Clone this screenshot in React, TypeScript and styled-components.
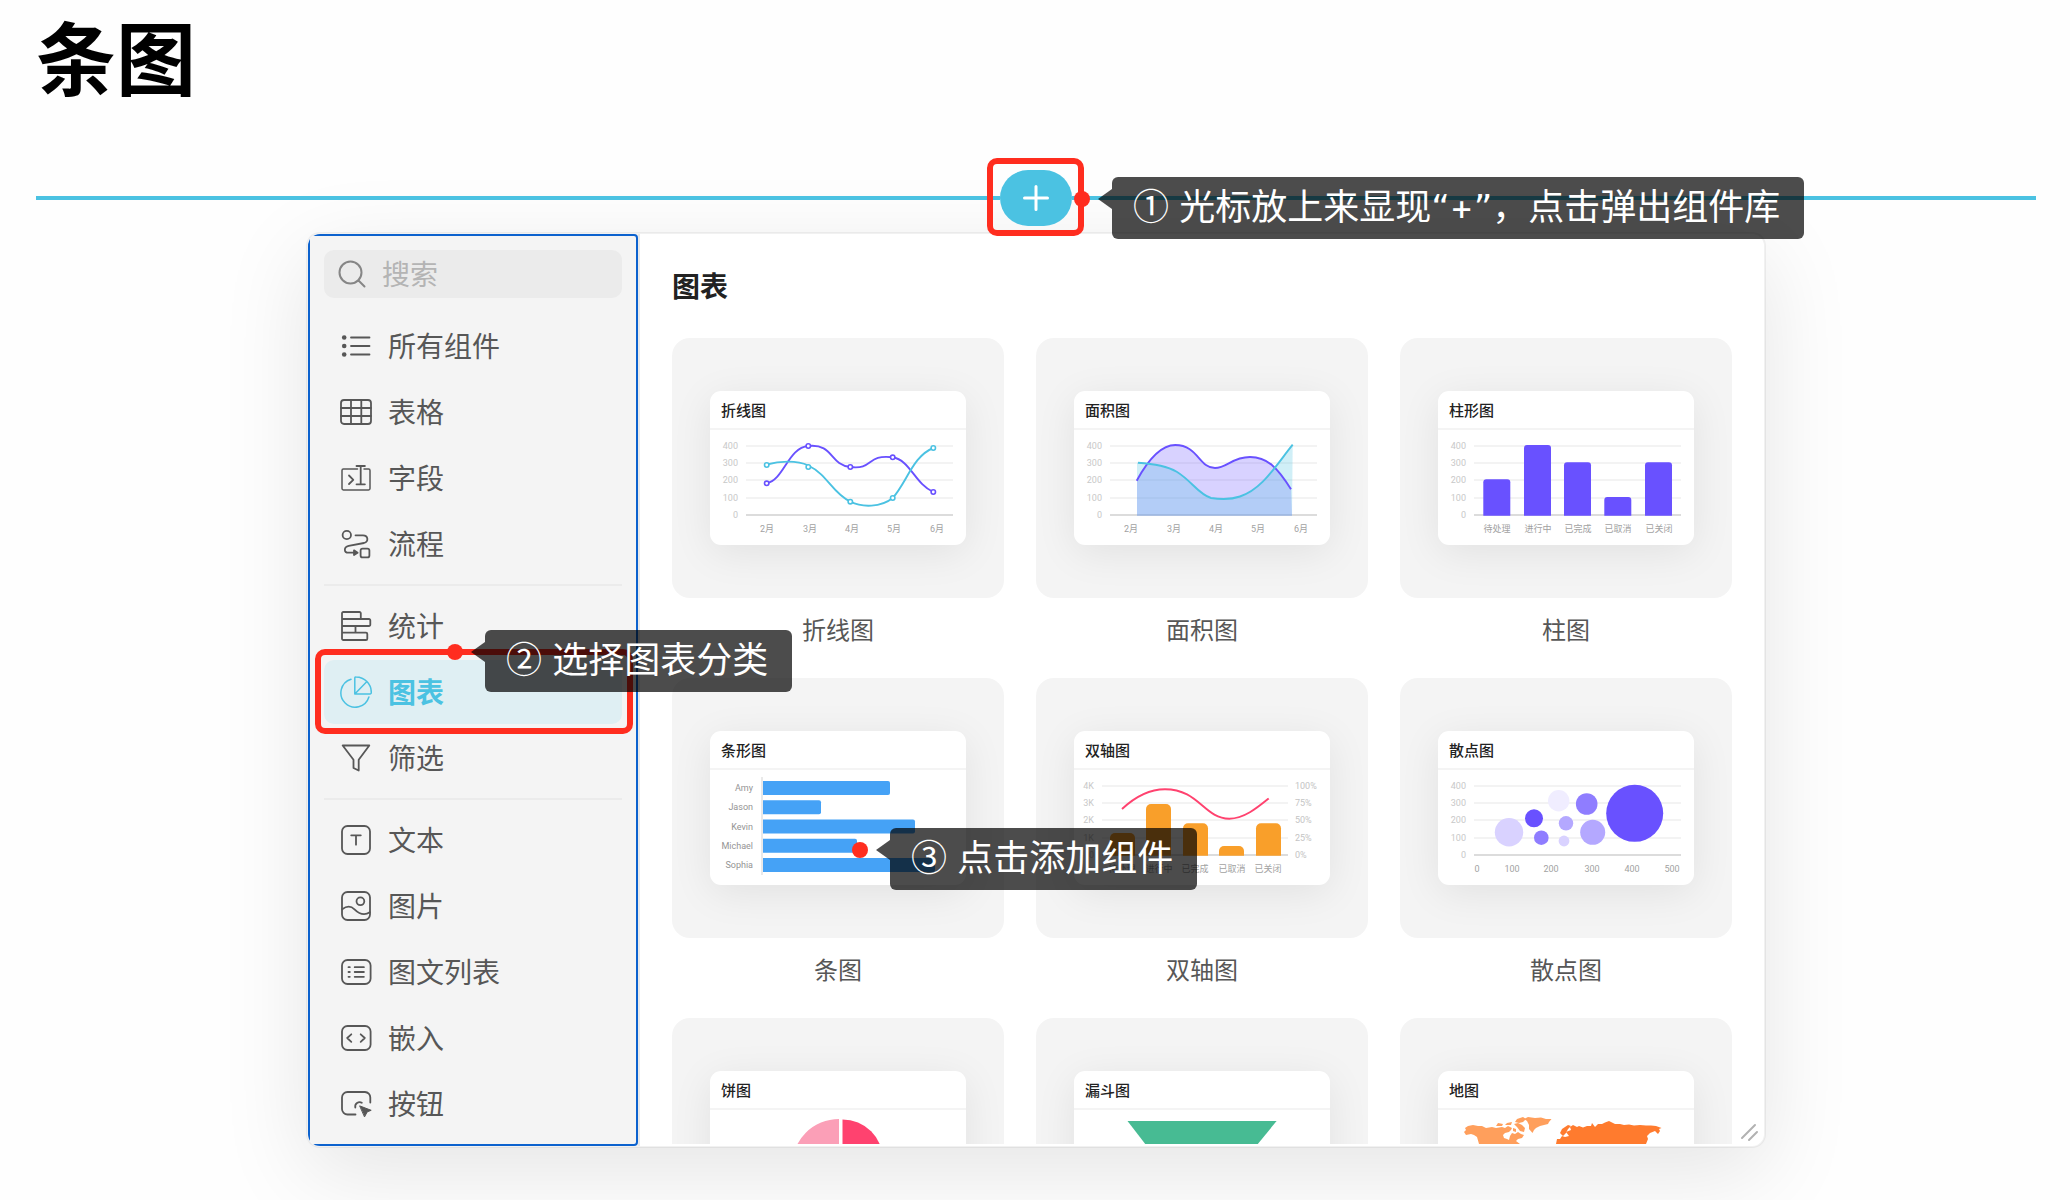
import React from "react";
import styled, { createGlobalStyle } from "styled-components";

const colors = {
  accent: "#4bc2e2",
  accentSoft: "#dfeff3",
  outline: "#0c62ce",
  mark: "#ff2d1f",
  surface: "#f4f4f4",
  field: "#ebebeb",
  text: "#222222",
  textSoft: "#575757",
  muted: "#b4b4b4",
  violet: "#6951ff",
  blue: "#45a2f6",
  orange: "#f99f2a",
  pink: "#ff426f",
};

const GlobalStyle = createGlobalStyle`
  *, *::before, *::after { box-sizing: border-box; }
  body {
    margin: 0;
    background: #fefefe;
    color: ${colors.text};
    font-family: Inter, "Noto Sans CJK SC", sans-serif;
    overflow-x: hidden;
  }
  button, input { font: inherit; color: inherit; }
  h1, h2, p, ul { margin: 0; padding: 0; }
  ul { list-style: none; }
`;

/* ---------- page ---------- */

const Page = styled.main`
  padding: 10px 34px 52px 36px;
`;

const PageTitle = styled.h1`
  font-size: 80px;
  line-height: 100px;
  font-weight: 700;
  color: #000;
`;

const InsertRow = styled.div`
  position: relative;
  z-index: 3;
  display: flex;
  align-items: center;
  margin-top: 60px;
`;

const InsertLine = styled.span`
  flex: 1;
  height: 4px;
  background: ${colors.accent};
`;

const InsertSlot = styled.div`
  position: relative;
  display: flex;
`;

const InsertButton = styled.button`
  display: flex;
  align-items: center;
  justify-content: center;
  width: 72px;
  height: 56px;
  padding: 0;
  border: 0;
  border-radius: 28px;
  background: ${colors.accent};
  color: #fff;
`;

/* ---------- guide marks ---------- */

const Frame = styled.span<{ $inset: string }>`
  position: absolute;
  inset: ${(p) => p.$inset};
  border: 6px solid ${colors.mark};
  border-radius: 10px;
  pointer-events: none;
`;

const Callout = styled.div<{ $left: number; $top: number }>`
  position: absolute;
  z-index: 4;
  left: ${(p) => p.$left}px;
  top: ${(p) => p.$top}px;
  padding: 6px 24px 8px 21px;
  border-radius: 6px;
  background: rgba(0, 0, 0, 0.7);
  color: #fff;
  font-size: 36px;
  line-height: 48px;
  white-space: nowrap;
  text-align: left;

  &::before {
    content: "";
    position: absolute;
    top: 12px;
    right: 100%;
    border: 10px solid transparent;
    border-left-width: 0;
    border-right: 14px solid rgba(0, 0, 0, 0.7);
  }

  &::after {
    content: "";
    position: absolute;
    top: 14px;
    left: -38px;
    width: 16px;
    height: 16px;
    border-radius: 50%;
    background: ${colors.mark};
  }
`;

const StepNumber = styled.span`
  font-family: "Noto Sans CJK SC", sans-serif;
  line-height: 1;
`;

const Quote = styled.span`
  font-family: "DejaVu Sans", sans-serif;
  line-height: 1;
`;

/* ---------- panel ---------- */

const Panel = styled.section`
  position: relative;
  display: flex;
  width: 1460px;
  max-width: 100%;
  margin: 6px auto 0;
  border: 2px solid rgba(0, 0, 0, 0.05);
  border-radius: 14px;
  background: #fff;
  background-clip: padding-box;
  box-shadow: 0 24px 88px rgba(0, 0, 0, 0.1);
`;

const Sidebar = styled.aside`
  position: relative;
  z-index: 2;
  flex: none;
  width: 332px;
  padding: 16px 16px 10px;
  border-right: 2px solid #e9e9e9;
  border-radius: 12px 0 0 12px;
  background: ${colors.surface};

  &::before {
    content: "";
    position: absolute;
    inset: 0;
    border: 2px solid ${colors.outline};
    border-radius: 4px;
    clip-path: inset(0 round 12px 0 0 12px);
    pointer-events: none;
  }
`;

const Search = styled.label`
  display: flex;
  align-items: center;
  gap: 14px;
  height: 48px;
  padding: 0 12px;
  border-radius: 10px;
  background: ${colors.field};
  color: #868686;
`;

const SearchInput = styled.input`
  flex: 1;
  min-width: 0;
  padding: 1px 0 0;
  border: 0;
  outline: 0;
  background: transparent;
  font-size: 28px;
  line-height: 40px;

  &::placeholder { color: ${colors.muted}; opacity: 1; }
`;

const Group = styled.ul`
  display: flex;
  flex-direction: column;
  gap: 2px;
  margin-top: 16px;

  & + & {
    margin-top: 8px;
    padding-top: 8px;
    border-top: 2px solid ${colors.field};
  }
`;

const GroupItem = styled.li`
  position: relative;
`;

const NavButton = styled.button<{ $active: boolean }>`
  display: flex;
  align-items: center;
  gap: 16px;
  width: 100%;
  height: 64px;
  padding: 0 16px;
  border: 0;
  border-radius: 10px;
  background: ${(p) => (p.$active ? colors.accentSoft : "transparent")};
  color: ${(p) => (p.$active ? colors.accent : colors.textSoft)};
  font-size: 28px;
  line-height: 40px;
  font-weight: ${(p) => (p.$active ? 700 : 400)};
`;

const NavLabel = styled.span`
  padding-top: 1px;
`;

const Content = styled.div`
  flex: 1;
  min-width: 0;
  contain: size;
  overflow: hidden;
  margin-bottom: 2px;
  padding: 32px 32px 0;
`;

const ContentTitle = styled.h2`
  padding-top: 1px;
  font-size: 28px;
  line-height: 40px;
  font-weight: 700;
`;

const Gallery = styled.ul`
  display: grid;
  grid-template-columns: repeat(3, 1fr);
  gap: 30px 32px;
  margin-top: 31px;
`;

const Tile = styled.li`
  position: relative;
`;

const TileButton = styled.button`
  display: flex;
  flex-direction: column;
  width: 100%;
  padding: 0;
  border: 0;
  background: transparent;
`;

const Preview = styled.span`
  display: flex;
  align-items: center;
  justify-content: center;
  width: 100%;
  height: 260px;
  border-radius: 18px;
  background: ${colors.surface};
  overflow: hidden;
`;

const MiniCard = styled.span`
  display: flex;
  flex-direction: column;
  width: 256px;
  border-radius: 11px;
  background: #fff;
  box-shadow: 0 8px 40px rgba(0, 0, 0, 0.08);
`;

const MiniTitle = styled.span`
  padding: 3px 11px 0;
  border-bottom: 2px solid #f4f4f4;
  font-size: 15px;
  line-height: 34px;
  font-weight: 500;
  text-align: left;
`;

const MiniChart = styled.svg`
  display: block;
  width: 256px;
  height: 115px;
  font-family: Roboto, "Noto Sans CJK SC", sans-serif;
  font-size: 9px;
`;

const TileLabel = styled.span`
  padding-top: 16px;
  font-size: 24px;
  line-height: 34px;
  color: ${colors.textSoft};
  text-align: center;
`;

const Resizer = styled.svg`
  position: absolute;
  z-index: 1;
  right: 4px;
  bottom: 4px;
`;

/* ---------- icons ---------- */

const Icon = ({ children }: { children: React.ReactNode }) => (
  <svg width="32" height="32" viewBox="0 0 32 32" fill="none" stroke="currentColor" strokeWidth="1.8" strokeLinecap="round" strokeLinejoin="round" aria-hidden="true">
    {children}
  </svg>
);

const icons: Record<string, React.ReactNode> = {
  list: (
    <>
      <path d="M11 7.5h18.5M11 16h18.5M11 24.5h18.5" />
      <g fill="currentColor" stroke="none">
        <circle cx="4.2" cy="7.5" r="2.3" />
        <circle cx="4.2" cy="16" r="2.3" />
        <circle cx="4.2" cy="24.5" r="2.3" />
      </g>
    </>
  ),
  table: (
    <>
      <rect x="1" y="4" width="30" height="24" rx="3" />
      <path d="M11 4v24M21.3 4v24M1 12h30M1 20h30" />
    </>
  ),
  field: (
    <>
      <path d="M17.5 7H3.4a1.4 1.4 0 0 0-1.4 1.4v18.2A1.4 1.4 0 0 0 3.4 28h25.2a1.4 1.4 0 0 0 1.4-1.4V8.4A1.4 1.4 0 0 0 28.6 7H24" strokeWidth="1.5" />
      <path d="M16.5 4h8.4M20.7 4v18.3M16.5 22.3h8.4" />
      <path d="M9 13.5l4.3 4.3L9 22" />
    </>
  ),
  flow: (
    <>
      <circle cx="6.8" cy="7" r="4.2" />
      <path d="M15.5 7.3h7.5c5.2 0 6 6.2 1 7.7L8.7 17.8C3.5 19 3.7 24.7 8.5 24.7h6" />
      <path d="M14 22.3l3.6 2.4L14 27z" fill="currentColor" />
      <rect x="20.6" y="20.6" width="8.8" height="8.8" rx="2" />
    </>
  ),
  stats: (
    <path d="M2 3.3A1.3 1.3 0 0 1 3.3 2H19.5a1.3 1.3 0 0 1 1.3 1.3V9M2 3.3V28.7A1.3 1.3 0 0 0 3.3 30H26a1.3 1.3 0 0 0 1.3-1.3V24A1.3 1.3 0 0 0 26 22.7H2M2 9H29a1.3 1.3 0 0 1 1.3 1.3v4.4A1.3 1.3 0 0 1 29 16H2M15.5 16v6.7" />
  ),
  pie: (
    <g strokeWidth="1.5">
      <path d="M11 3.2A14.3 14.3 0 1 0 28.9 21" />
      <path d="M14.8 2a1.2 1.2 0 0 1 1.3-1.1A15.5 15.5 0 0 1 31.3 16.5a1.3 1.3 0 0 1-1.3 1.4H14.8zM14.8 17.9L26.2 6.2" />
    </g>
  ),
  filter: <path d="M2.7 3.5H29.3L18.7 17.8V28.5L13.5 26V17.8z" />,
  text: (
    <>
      <rect x="2" y="2" width="28" height="28" rx="5.5" />
      <path d="M11.2 11.3h9.6M16 11.3V20.7" />
    </>
  ),
  image: (
    <>
      <rect x="2" y="2" width="28" height="28" rx="5.5" />
      <circle cx="20.4" cy="11.3" r="3.9" />
      <path d="M2.2 19.2C6 16.3 10.5 15.3 14.5 19.3c5 5 9.5 6.8 15.3 3" />
    </>
  ),
  rich: (
    <>
      <rect x="2" y="4" width="28.6" height="24" rx="5.5" />
      <path d="M14.7 11.2h9.2M14.7 16h9.2M14.7 20.8h9.2M8.5 11.2h1.3M8.5 16h1.3M8.5 20.8h1.3" />
    </>
  ),
  embed: (
    <>
      <rect x="2" y="4" width="28.6" height="24" rx="5.5" />
      <path d="M11.3 12.3L7.2 16l4.1 3.8M20.7 12.3l4.1 3.7-4.1 3.8" />
    </>
  ),
  button: (
    <>
      <path d="M30.3 14.5V9.5A5.5 5.5 0 0 0 25 4H7.5A5.5 5.5 0 0 0 2 9.5V21a5.5 5.5 0 0 0 5.5 5.5H15.5" />
      <path d="M15.3 19.5a4.4 4.4 0 0 1 6.5-4.7" />
      <path d="M20 18l11.2 4.3-4 1.6-2.5 4.7z" fill="currentColor" strokeWidth="1" />
    </>
  ),
};

/* ---------- chart pieces ---------- */

const gridY = [16, 33, 50, 68, 85];
const months = ["2月", "3月", "4月", "5月", "6月"];
const states = ["待处理", "进行中", "已完成", "已取消", "已关闭"];
const hundreds = ["400", "300", "200", "100", "0"];

type AxesProps = { from?: number; to?: number; left: string[]; right?: string[] };

const Axes = ({ from = 36, to = 243, left, right = [] }: AxesProps) => (
  <>
    {gridY.map((y, i) => (
      <g key={y}>
        <line x1={from} x2={to} y1={y} y2={y} stroke={i === 4 ? "#dcdcdc" : "#f3f3f3"} strokeWidth="2" />
        <text x={from - 8} y={y + 3} textAnchor="end" fill="#c8c8c8">{left[i]}</text>
        {right[i] && <text x={to + 7} y={y + 3} fill="#c4c4c4">{right[i]}</text>}
      </g>
    ))}
  </>
);

const XLabels = ({ items, xs }: { items: string[]; xs: number[] }) => (
  <>
    {items.map((t, i) => (
      <text key={t} x={xs[i]} y="102" textAnchor="middle" fill="#a2a2a2">{t}</text>
    ))}
  </>
);

type BarsProps = { xs: number[]; tops: number[]; width: number; r: number; color: string };

const Bars = ({ xs, tops, width, r, color }: BarsProps) => (
  <>
    {xs.map((x, i) => (
      <path
        key={x}
        fill={color}
        d={`M${x} 85.7V${tops[i] + r}a${r} ${r} 0 0 1 ${r} ${-r}h${width - 2 * r}a${r} ${r} 0 0 1 ${r} ${r}V85.7z`}
      />
    ))}
  </>
);

const monthXs = [57, 100, 142, 184, 227];

const Dots = ({ points, color }: { points: number[][]; color: string }) => (
  <>
    {points.map(([x, y]) => (
      <circle key={x} cx={x} cy={y} r="2.2" fill="#fff" stroke={color} strokeWidth="1.6" />
    ))}
  </>
);

const LineChart = () => (
  <>
    <Axes left={hundreds} />
    <g fill="none" strokeWidth="1.9">
      <path stroke={colors.violet} d="M56.7 53.3C74 50 78 17.5 98.3 16C124 13.5 119 34.5 140.3 37C164 40 156 24 182.7 27.3C200 30 205 54 223.3 62" />
      <path stroke={colors.accent} d="M56.7 34.5C69 31 87 30 98.3 35.5C118 45 122 63 140.3 71.7C152 77.5 171 77.5 182.7 68C197 52 203 26 223.3 18" />
    </g>
    <Dots color={colors.violet} points={[[56.7, 53.3], [98.3, 16], [140.3, 37], [182.7, 27.3], [223.3, 62]]} />
    <Dots color={colors.accent} points={[[56.7, 35], [98.3, 37], [140.3, 71.7], [182.7, 68], [223.3, 18]]} />
    <XLabels items={months} xs={monthXs} />
  </>
);

const violetCurve = "C74 30 87 15 101.3 15C124 15 125 38 141 38C153 38 158 27 176 27C193 27 203 37 217 59.3";
const cyanCurve = "C77 33.5 92 35.5 102.7 41.7C118 51 124 64 137 68C147 69.5 158 69.3 166 66.5C188 59 200 38 218.7 14.7";

const AreaChart = () => (
  <>
    <Axes left={hundreds} />
    <path fill={colors.violet} fillOpacity="0.26" d={`M63 50.7${violetCurve}L218 85.7H63z`} />
    <path fill={colors.accent} fillOpacity="0.26" d={`M63 32.7${cyanCurve}L218 85.7H63z`} />
    <g fill="none" strokeWidth="1.9">
      <path stroke={colors.violet} d={`M62.7 50.7${violetCurve}`} />
      <path stroke={colors.accent} d={`M64 32.7${cyanCurve}`} />
    </g>
    <XLabels items={months} xs={monthXs} />
  </>
);

const ColumnChart = () => (
  <>
    <Axes left={hundreds} />
    <Bars color={colors.violet} width={27} r={3} xs={[45.3, 86, 126, 166.3, 207]} tops={[49.3, 15, 32.3, 67, 32.3]} />
    <XLabels items={states} xs={[59, 100, 140, 180, 221]} />
  </>
);

const people: [string, number][] = [["Amy", 127], ["Jason", 58], ["Kevin", 152], ["Michael", 94], ["Sophia", 172]];

const BarChart = () => (
  <>
    <line x1="52" x2="52" y1="7" y2="105" stroke="#e9e9e9" strokeWidth="2" />
    {people.map(([name, value], i) => {
      const y = 11 + i * 19.25;
      return (
        <g key={name}>
          <text x="43" y={y + 10} textAnchor="end" fill="#949494">{name}</text>
          <path fill={colors.blue} d={`M53 ${y}h${value - 2}a2 2 0 0 1 2 2v10a2 2 0 0 1-2 2H53z`} />
        </g>
      );
    })}
  </>
);

const DualChart = () => (
  <>
    <Axes from={28} to={214} left={["4K", "3K", "2K", "1K", "0"]} right={["100%", "75%", "50%", "25%", "0%"]} />
    <Bars color={colors.orange} width={25} r={5} xs={[36, 72, 109, 145, 182]} tops={[63, 34, 53.3, 76, 53.3]} />
    <path fill="none" stroke={colors.pink} strokeWidth="1.9" d="M48 39C63 25 77 19.2 91 19.2C125 19.2 130 48.7 155.3 48.7C170 48.7 183 38 194.7 28.5" />
    <XLabels items={states} xs={[48, 85, 121, 158, 194]} />
  </>
);

const bubbles: [number, number, number, string][] = [
  [71, 62.3, 14.2, "#d9d2ff"],
  [96, 48.3, 9, "#6951ff"],
  [103.3, 67.7, 7.3, "#8f7dff"],
  [120.7, 30.7, 10.7, "#f0edff"],
  [148.7, 34, 10.8, "#8f7dff"],
  [128, 53.3, 7.2, "#b4a8ff"],
  [126, 71, 5.4, "#d9d2ff"],
  [154.7, 62.3, 12.5, "#b4a8ff"],
  [196.7, 43.3, 28.5, "#6951ff"],
];

const ScatterChart = () => (
  <>
    <Axes left={hundreds} />
    {bubbles.map(([x, y, r, c]) => <circle key={x} cx={x} cy={y} r={r} fill={c} />)}
    <XLabels items={["0", "100", "200", "300", "400", "500"]} xs={[39, 74, 113, 154, 194, 234]} />
  </>
);

const PieChart = () => (
  <>
    <path fill="#fb9fb7" d="M129 9A47 47 0 0 0 129 103z" />
    <path fill={colors.pink} d="M132.5 9.5A40.5 40.5 0 0 1 132.5 90.5z" />
  </>
);

const FunnelChart = () => (
  <>
    <path fill="#47bb93" d="M53.5 11H202.6L183 35H72z" />
    <path fill="#6fcfae" d="M74 38H181L162 62H93z" />
    <path fill="#a3e2cd" d="M95 65H160L141 89H114z" />
  </>
);

const MapChart = () => (
  <>
    <g fill="#ff9f5c">
      <path d="M26 22L28 20 27 18 30 16 35 15 40 16 44 16 48 18 54 17 58 18 64 17 67 18 70 16 74 18 73 20 71 22 67 23 65 25 66 28 69 29 71 30 72 26 74 23 77 24 80 22 83 24 86 25 84 28 80 29 78 31 82 34 76 36H42L41 34 39 27 36 25 33 24 28 25z" />
      <path d="M58 16L60 13 65 14 64 16zM67 15L69 13 74 12 73 15zM76 14L80 13 84 15 87 18 86 22 82 21 79 17zM77 12L79 9 85 7 88 9 85 12 81 13zM75 18L78 19 78 22 75 21z" />
      <path d="M86 9L90 7 97 8 103 7.5 108 9 113.5 9 111 12 110 14 106 15 102 16 98 18 96 20 94.5 23 91 19 91 15 89 11z" />
    </g>
    <g fill="#ff7b2e">
      <path d="M118 34L119 29 122 29 124 26 127 27 131 26 128 22 133 20 132 17 135 15 139 17 141 16 145 17.5 149 16 153 16 154 13 157 17 160 14 164 14 167 12.5 171 11 175 13 177 14 182 14 186 15 191 14.5 196 15.5 202 15 208 15.5 213 15.5 218 16 223.5 18 221 19 222 21 220 24 217 21 212 23 209 26 210 29 208 34V36H118z" />
      <path d="M122 23L124 19 127 17 130 15 133 16 130 19 128 23 125 26z" />
    </g>
  </>
);

/* ---------- data ---------- */

const navGroups = [
  [["list", "所有组件"], ["table", "表格"], ["field", "字段"], ["flow", "流程"]],
  [["stats", "统计"], ["pie", "图表"], ["filter", "筛选"]],
  [["text", "文本"], ["image", "图片"], ["rich", "图文列表"], ["embed", "嵌入"], ["button", "按钮"]],
];

const activeItem = "图表";

const tiles = [
  { title: "折线图", label: "折线图", Chart: LineChart },
  { title: "面积图", label: "面积图", Chart: AreaChart },
  { title: "柱形图", label: "柱图", Chart: ColumnChart },
  { title: "条形图", label: "条图", Chart: BarChart },
  { title: "双轴图", label: "双轴图", Chart: DualChart },
  { title: "散点图", label: "散点图", Chart: ScatterChart },
  { title: "饼图", label: "饼图", Chart: PieChart },
  { title: "漏斗图", label: "漏斗图", Chart: FunnelChart },
  { title: "地图", label: "地图", Chart: MapChart },
];

export default function App() {
  return (
    <>
      <GlobalStyle />
      <Page>
        <PageTitle>条图</PageTitle>

        <InsertRow>
          <InsertLine />
          <InsertSlot>
            <InsertButton type="button" aria-label="添加组件">
              <svg width="26" height="26" viewBox="0 0 26 26" stroke="currentColor" strokeWidth="3" strokeLinecap="round" aria-hidden="true">
                <path d="M13 1.5v23M1.5 13h23" />
              </svg>
            </InsertButton>
            <Frame $inset="-12px -12px -10px -13px" />
            <Callout $left={112} $top={7}>
              <StepNumber>①</StepNumber> 光标放上来显现<Quote>“</Quote>+<Quote>”</Quote>，点击弹出组件库
            </Callout>
          </InsertSlot>
          <InsertLine />
        </InsertRow>

        <Panel>
          <Sidebar>
            <Search>
              <svg width="32" height="32" viewBox="0 0 32 32" fill="none" stroke="currentColor" strokeWidth="2" strokeLinecap="round" aria-hidden="true">
                <circle cx="14.5" cy="14.5" r="11" />
                <path d="M22.5 22.5l6 6" />
              </svg>
              <SearchInput type="text" placeholder="搜索" aria-label="搜索" />
            </Search>
            {navGroups.map((group) => (
              <Group key={group[0][1]}>
                {group.map(([icon, label]) => (
                  <GroupItem key={label}>
                    <NavButton type="button" $active={label === activeItem}>
                      <Icon>{icons[icon]}</Icon>
                      <NavLabel>{label}</NavLabel>
                    </NavButton>
                    {label === activeItem && (
                      <>
                        <Frame $inset="-11px -11px -10px -9px" />
                        <Callout $left={161} $top={-30}>
                          <StepNumber>②</StepNumber> 选择图表分类
                        </Callout>
                      </>
                    )}
                  </GroupItem>
                ))}
              </Group>
            ))}
          </Sidebar>

          <Content>
            <ContentTitle>图表</ContentTitle>
            <Gallery>
              {tiles.map(({ title, label, Chart }) => (
                <Tile key={label}>
                  <TileButton type="button">
                    <Preview>
                      <MiniCard>
                        <MiniTitle>{title}</MiniTitle>
                        <MiniChart viewBox="0 0 256 115" aria-hidden="true"><Chart /></MiniChart>
                      </MiniCard>
                    </Preview>
                    <TileLabel>{label}</TileLabel>
                  </TileButton>
                  {label === "条图" && (
                    <Callout $left={218} $top={150}>
                      <StepNumber>③</StepNumber> 点击添加组件
                    </Callout>
                  )}
                </Tile>
              ))}
            </Gallery>
          </Content>

          <Resizer width="20" height="20" viewBox="0 0 20 20" fill="none" stroke="#b2b2b2" strokeWidth="2" strokeLinecap="round" aria-hidden="true">
            <path d="M2 16L15 3M9 18L17 10" />
          </Resizer>
        </Panel>
      </Page>
    </>
  );
}
